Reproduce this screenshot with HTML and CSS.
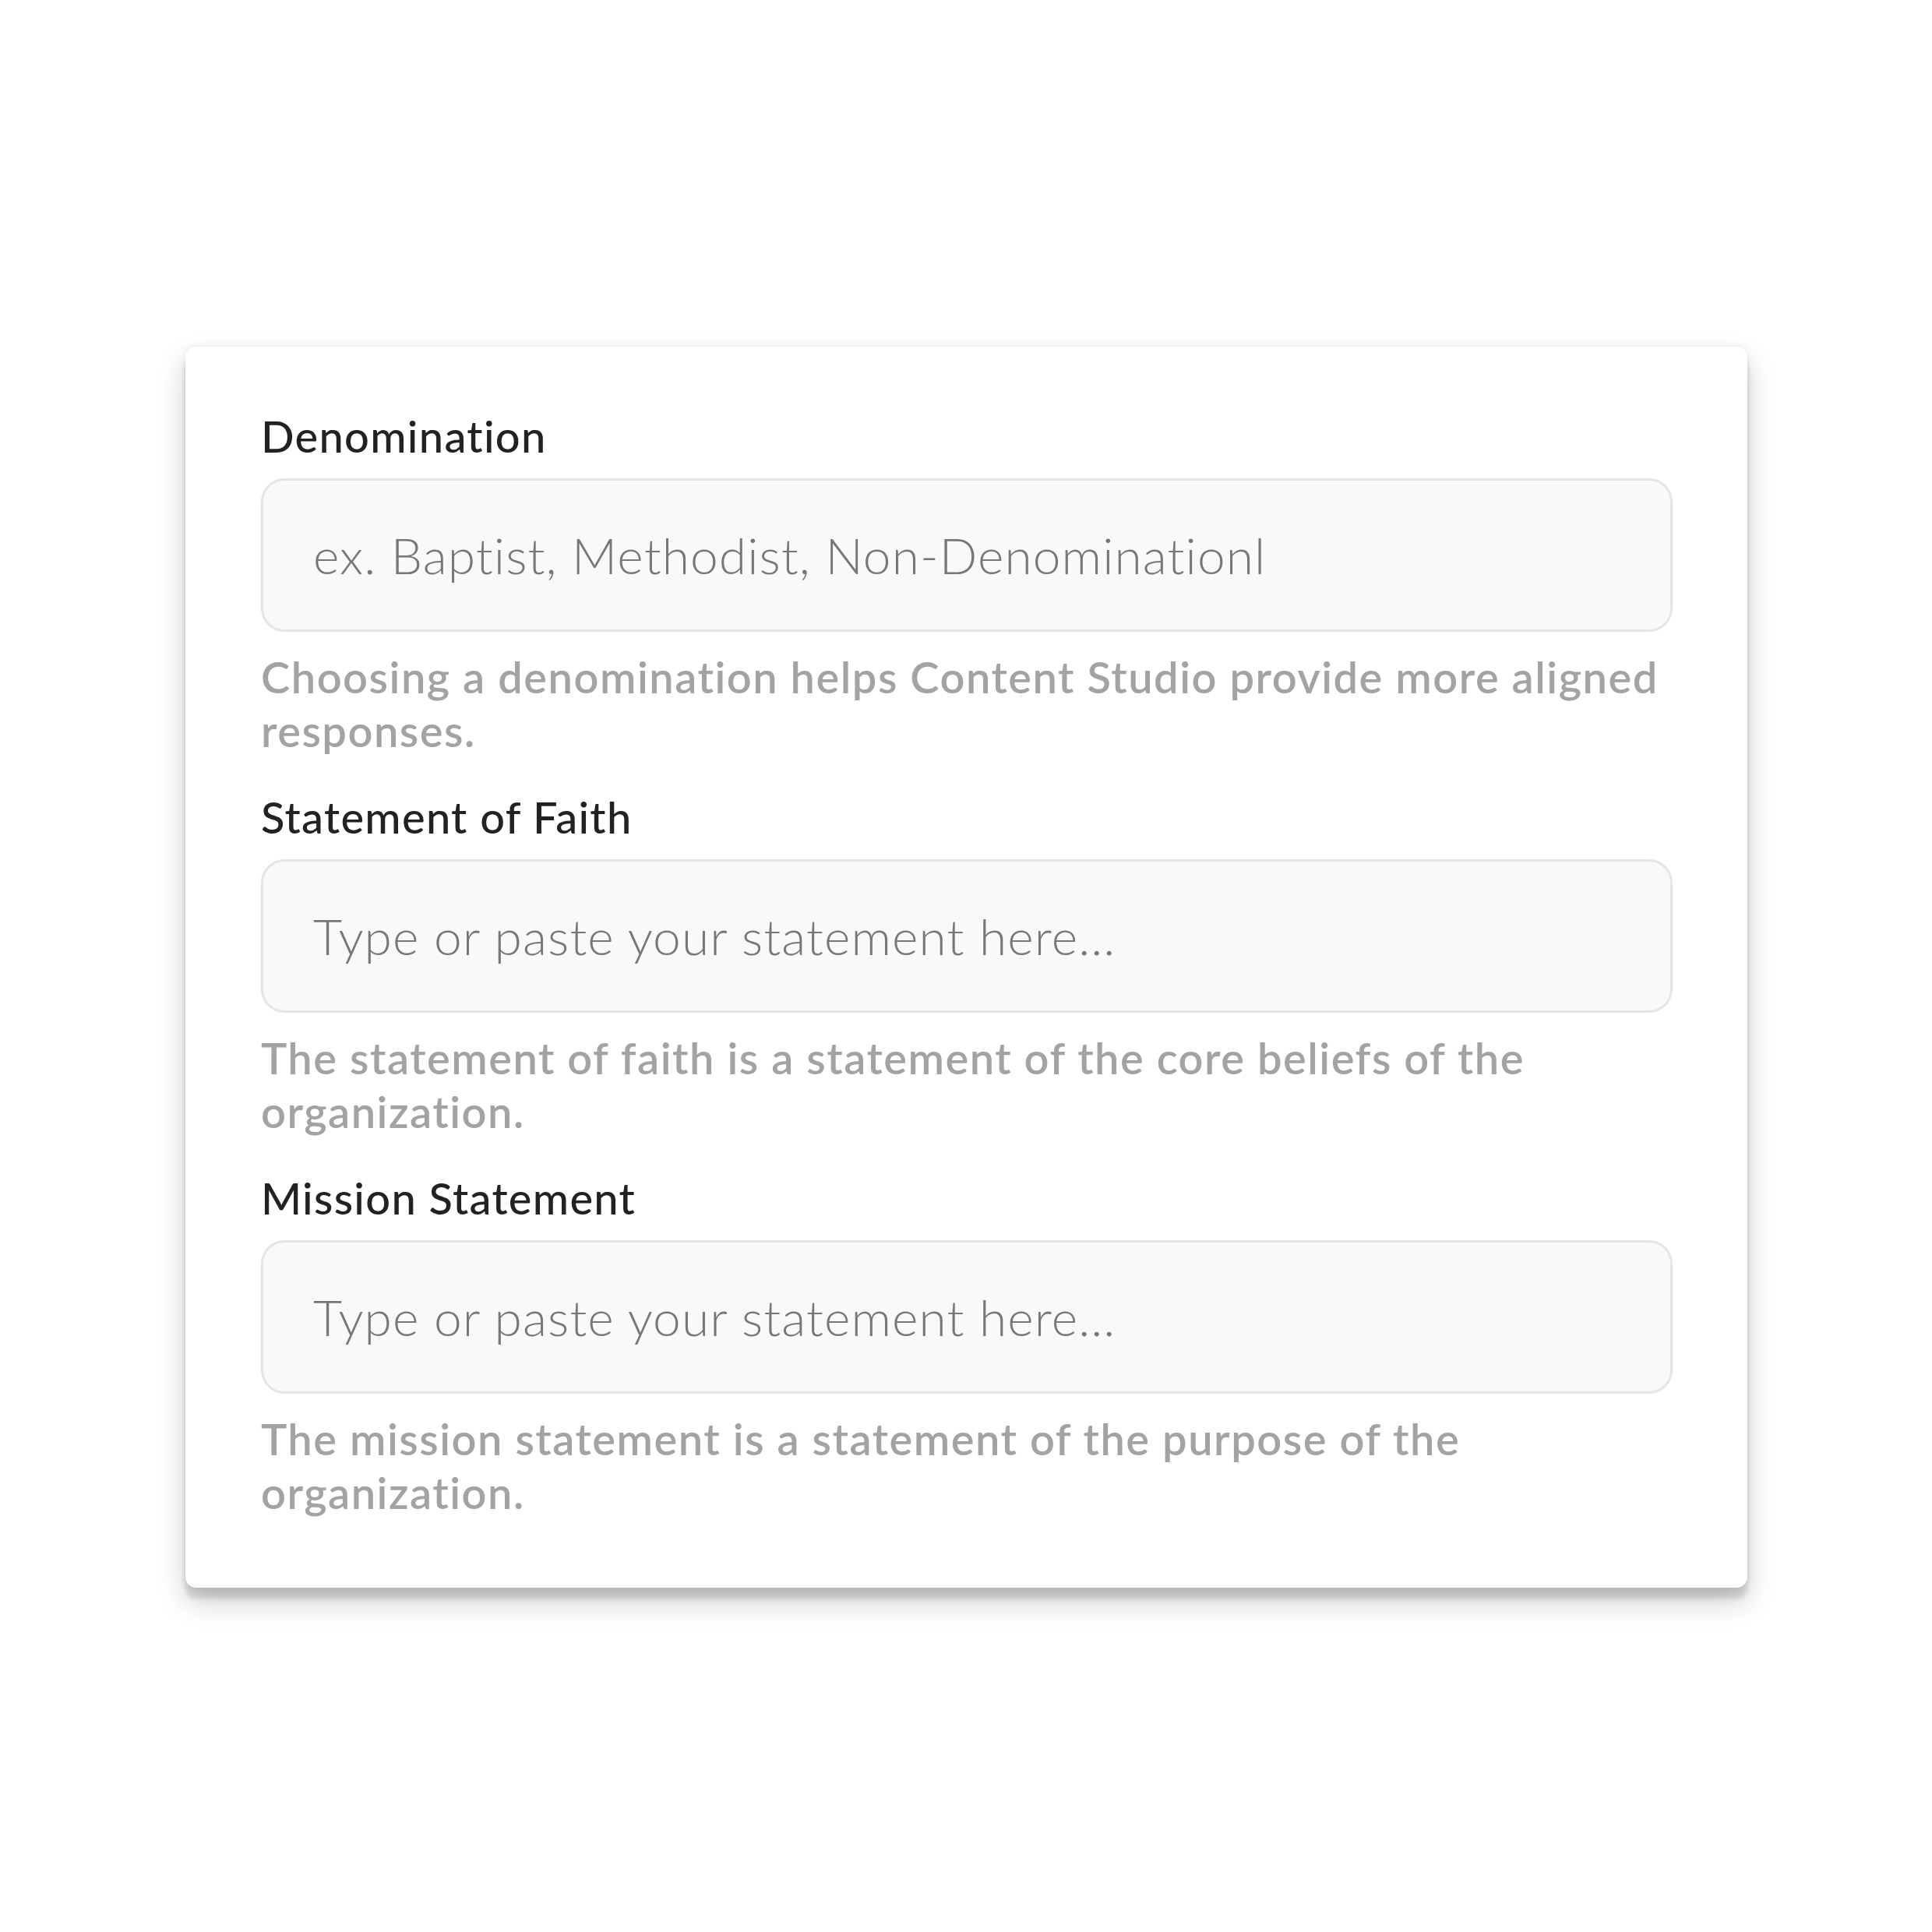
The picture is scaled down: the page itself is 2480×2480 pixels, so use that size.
FILE: index.html
```html
<!DOCTYPE html>
<html lang="en">
<head>
<meta charset="utf-8">
<title>Organization details</title>
<link rel="stylesheet" href="styles.css">
</head>
<body>
<main class="stage">
  <section class="card">
    <div class="field">
      <label class="label" for="denomination">Denomination</label>
      <input class="input" id="denomination" type="text" placeholder="ex. Baptist, Methodist, Non-Denominationl">
      <p class="help">Choosing a denomination helps Content Studio provide more aligned responses.</p>
    </div>
    <div class="field">
      <label class="label" for="faith">Statement of Faith</label>
      <input class="input" id="faith" type="text" placeholder="Type or paste your statement here...">
      <p class="help">The statement of faith is a statement of the core beliefs of the organization.</p>
    </div>
    <div class="field">
      <label class="label" for="mission">Mission Statement</label>
      <input class="input" id="mission" type="text" placeholder="Type or paste your statement here...">
      <p class="help">The mission statement is a statement of the purpose of the organization.</p>
    </div>
  </section>
</main>
</body>
</html>
```

FILE: styles.css
```css
* { box-sizing: border-box; }

html, body {
  margin: 0;
  padding: 0;
  background: #ffffff;
}

body {
  font-family: "Lato", "Liberation Sans", sans-serif;
  font-variant-ligatures: none;
}

.stage {
  padding: 445px 0 200px 238px;
}

.card {
  width: 2005px;
  background: #ffffff;
  border-radius: 14px;
  padding: 81px 96px 88px 97px;
  display: flex;
  flex-direction: column;
  gap: 43px;
  box-shadow:
    0 14px 6px rgba(0, 0, 0, 0.12),
    0 18px 36px rgba(0, 0, 0, 0.20),
    0 0 8px rgba(0, 0, 0, 0.07);
}

.field {
  display: flex;
  flex-direction: column;
}

.label {
  font-size: 56px;
  line-height: 68px;
  font-weight: 500;
  letter-spacing: 1.3px;
  color: #222222;
  margin: 0 0 20px 0;
}

.input {
  display: block;
  width: 100%;
  height: 197px;
  border: 3px solid #e5e5e5;
  border-radius: 30px;
  background: #f9f9f9;
  padding: 0 64px;
  font-family: inherit;
  font-variant-ligatures: none;
  font-size: 64px;
  font-weight: 300;
  letter-spacing: 1.1px;
  color: #333333;
  outline: none;
}

.input::placeholder {
  color: #777777;
  opacity: 1;
}

.help {
  margin: 23px 0 0 0;
  font-size: 56px;
  line-height: 69px;
  font-weight: 600;
  letter-spacing: 1.5px;
  color: #a3a3a3;
}
```
